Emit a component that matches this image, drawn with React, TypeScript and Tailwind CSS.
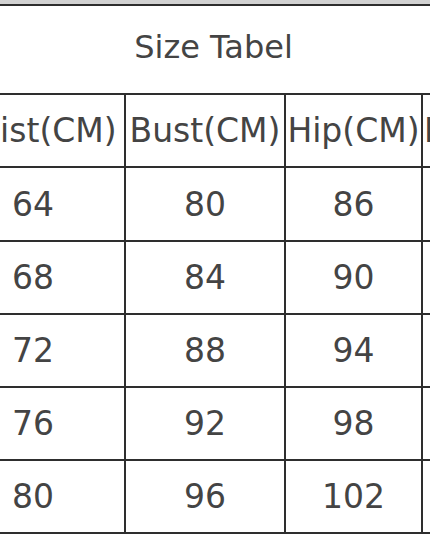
import React from "react";

const rows = [
  ["64", "80", "86"],
  ["68", "84", "90"],
  ["72", "88", "94"],
  ["76", "92", "98"],
  ["80", "96", "102"],
];

export default function App() {
  const font = { fontFamily: '"DejaVu Sans", Verdana, sans-serif' };
  return (
    <div
      className="w-[430px] h-[537px] overflow-hidden bg-white text-[#444444]"
      style={font}
    >
      <div className="h-[4px] bg-[#d2d2d2]" />
      <div className="h-[2px] bg-[#2e2e2e]" />
      <div className="h-[87px] flex items-center justify-center pr-[3px] pb-[5px] text-[32px] leading-none">
        Size Tabel
      </div>
      <div className="ml-[-58px] w-[600px] grid grid-cols-[182px_158px_135px_1fr] grid-rows-[71px_72px_71px_71px_71px_71px] gap-[2px] bg-[#2e2e2e] pt-[2px] pb-[2px] text-[33px] leading-none">
        <div className="bg-white flex items-center justify-center whitespace-nowrap">Waist(CM)</div>
        <div className="bg-white flex items-center justify-center whitespace-nowrap">Bust(CM)</div>
        <div className="bg-white flex items-center justify-center whitespace-nowrap">Hip(CM)</div>
        <div className="bg-white flex items-center pl-[1px] whitespace-nowrap">Length(CM)</div>
        {rows.map((r, i) => (
          <React.Fragment key={i}>
            <div className="bg-white flex items-center justify-center">{r[0]}</div>
            <div className="bg-white flex items-center justify-center">{r[1]}</div>
            <div className="bg-white flex items-center justify-center">{r[2]}</div>
            <div className="bg-white" />
          </React.Fragment>
        ))}
      </div>
    </div>
  );
}
